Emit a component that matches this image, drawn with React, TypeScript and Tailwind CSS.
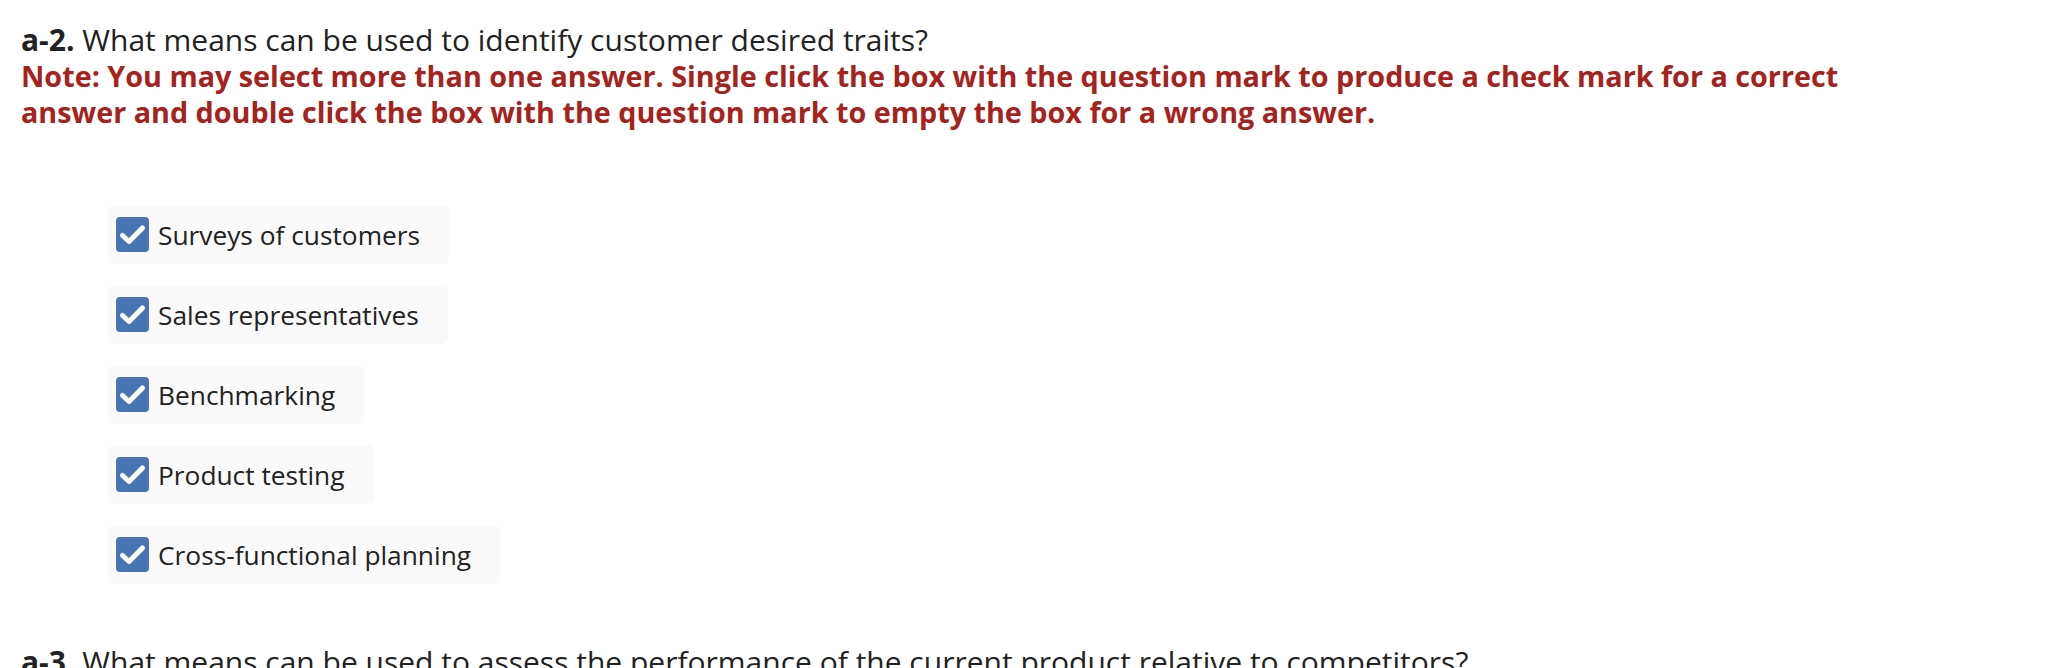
const options = [
  "Surveys of customers",
  "Sales representatives",
  "Benchmarking",
  "Product testing",
  "Cross-functional planning",
];

function CheckBox() {
  return (
    <span className="flex h-[35px] w-[33px] shrink-0 items-center justify-center rounded-[4px] bg-[#4874b4]">
      <svg width="33" height="35" viewBox="0 0 33 35" fill="none">
        <path
          d="M6.5 18.5 L13 24.5 L26.5 11"
          stroke="#fff"
          strokeWidth="5"
          strokeLinecap="round"
          strokeLinejoin="round"
        />
      </svg>
    </span>
  );
}

export default function App() {
  return (
    <div className="h-[668px] overflow-hidden bg-white font-['Open_Sans','Liberation_Sans',sans-serif] leading-[36px] text-[#222]">
      <div className="pl-[21px] pt-[22px]">
        <p className="text-[30px]">
          <span className="font-bold">a-2.</span> What means can be used to identify customer desired traits?
        </p>
        <p className="max-w-[1850px] text-[28.75px] font-bold text-[#a5221d]">
          Note: You may select more than one answer. Single click the box with the question mark to produce a check mark for a correct answer and double click the box with the question mark to empty the box for a wrong answer.
        </p>
      </div>

      <div className="mt-[75px] flex flex-col items-start gap-[21px] pl-[108px] text-[26.3px]">
        {options.map((o) => (
          <div
            key={o}
            className="flex h-[59px] items-center gap-[9px] rounded-[6px] bg-[#fafafa] pl-[8px] pr-[29px]"
          >
            <CheckBox />
            <span>{o}</span>
          </div>
        ))}
      </div>

      <p className="mt-[60px] pl-[21px] text-[30px]">
        <span className="font-bold">a-3.</span> What means can be used to assess the performance of the current product relative to competitors?
      </p>
    </div>
  );
}
